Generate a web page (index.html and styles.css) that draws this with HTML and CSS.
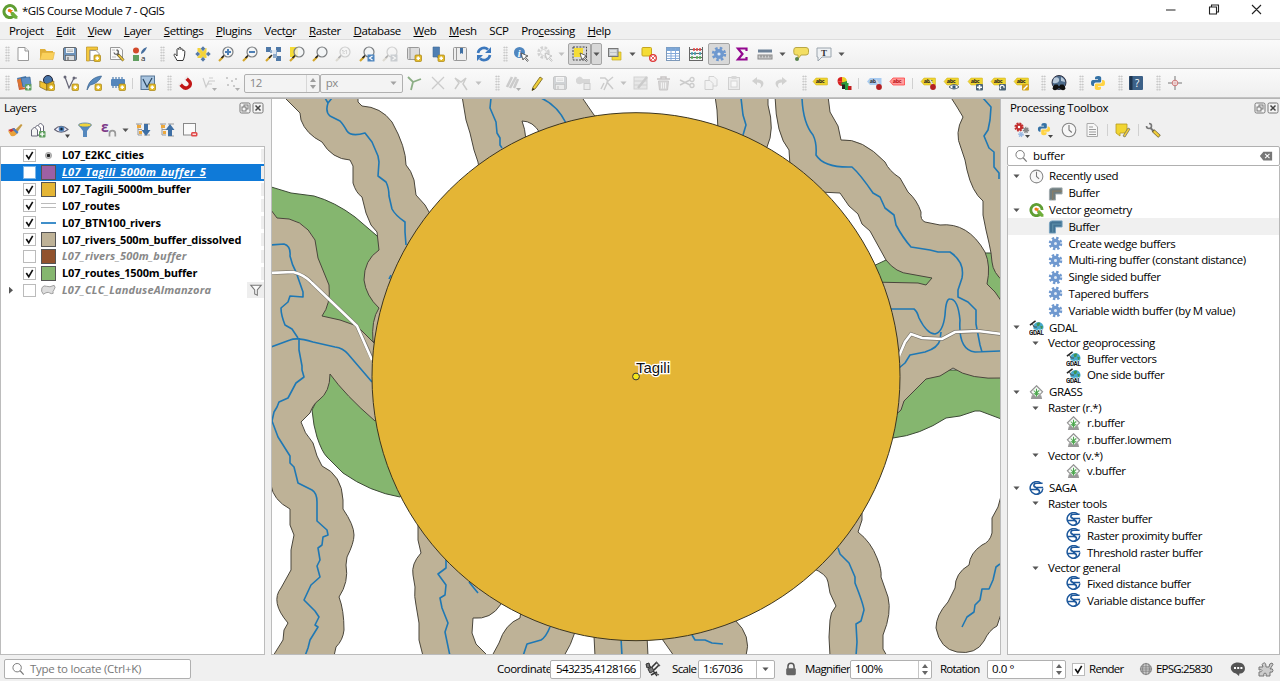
FILE: index.html
```html
<!DOCTYPE html>
<html lang="en">
<head>
<meta charset="utf-8">
<title>*GIS Course Module 7 - QGIS</title>
<link rel="stylesheet" href="styles.css">
</head>
<body>
<svg class="defs" width="0" height="0">
  <symbol id="qgis" viewBox="0 0 16 16"><path d="M11.800 13.200A6 6 0 1 1 14 8.500" fill="none" stroke="#5f9e33" stroke-width="3"/><path d="M8.800 8.800l2.600.1 4 4.300v2.600h-2.600l-4-4z" fill="#6fae3b"/><path d="M7 7h4L9.500 8.700l-.8 2z" fill="#ee7913"/><circle cx="7.500" cy="7.500" r="1.700" fill="#ee7913"/></symbol>
  <symbol id="new" viewBox="0 0 16 16"><path d="M3 1.500h7L13.500 5v9.500H3z" fill="#fff" stroke="#999"/><path d="M10 1.500V5h3.500" fill="#eee" stroke="#999"/></symbol>
  <symbol id="open" viewBox="0 0 16 16"><path d="M1 13V3h5l1.500 2H14v2" fill="#e0b03a"/><path d="M1 13.500L3 6.500h12.500L14 13.500z" fill="#fad15c" stroke="#e0b03a" stroke-width=".6"/></symbol>
  <symbol id="save" viewBox="0 0 16 16"><rect x="1.500" y="1.500" width="13" height="13" rx="1.500" fill="#6d93bb" stroke="#66696d"/><rect x="4" y="2" width="8" height="5" fill="#eef3f7"/><path d="M5 4h6M5 5.500h6" stroke="#999" stroke-width=".7"/><rect x="3.500" y="9.500" width="9" height="5" fill="#d9dcdf" stroke="#555" stroke-width=".6"/><path d="M6 11v3" stroke="#555"/></symbol>
  <symbol id="star" viewBox="0 0 16 16"><rect x="9" y="9" width="6.500" height="6.500" rx="1" fill="#e3bb2b" stroke="#a78310" stroke-width=".7"/><path d="M12.200 10.500v3.500M10.500 12.200h3.500" stroke="#fff" stroke-width="1.600"/></symbol>
  <symbol id="layout" viewBox="0 0 16 16"><path d="M1.500 1h11v3h-8v11h-3z" fill="#f5c83c" stroke="#b88f20" stroke-width=".7"/><path d="M5 4.500h6l3 3v7H5z" fill="#fff" stroke="#999"/><use href="#star"/></symbol>
  <symbol id="manager" viewBox="0 0 16 16"><path d="M1.500 1.500h9.500l2.500 2.500v9.500h-12z" fill="#fafafa" stroke="#999"/><path d="M3 4h3M3 11h4" stroke="#bbb"/><path d="M8.500 8l6 6.500" stroke="#665c33" stroke-width="2.800"/><path d="M9.500 9l5 5.500" stroke="#ecc43e" stroke-width="1.800"/><path d="M5 6.500a2.200 2.200 0 1 0 2.500-2.500" fill="none" stroke="#666" stroke-width="1.400"/></symbol>
  <symbol id="style" viewBox="0 0 16 16"><circle cx="4" cy="4.500" r="3" fill="#d2492a"/><path d="M9 8c0-4 3-6 6-7-1 3-3 6-6 7z" fill="#476f9e"/><rect x="1" y="9" width="6" height="6" fill="#5f9e5f"/><text x="9" y="15" font-size="8" font-family="Open Sans" fill="#222">a</text></symbol>
  <symbol id="hand" viewBox="0 0 16 16"><path d="M5 14.500C3.500 11 1.800 10 2 8.500c1-1 2 0 3 1.500V3.500c.5-1.500 1.700-1 1.900 0V2c.5-1 1.700-1 2 0v1.500c.5-1 1.800-.8 2 0V5c.6-.8 1.700-.6 1.900.3 0 4-.3 5.700-1.800 9.200z" fill="#fff" stroke="#333"/></symbol>
  <symbol id="panto" viewBox="0 0 16 16"><path d="M2.500 2h9v10h-9z" fill="#f3d33a"/><path d="M8 0l2.500 2.700L8 5.400 5.500 2.700zM8 10.600l2.500 2.700L8 16l-2.500-2.700zM0 8l2.700-2.500L5.400 8l-2.700 2.500zM10.600 8l2.700-2.500L16 8l-2.700 2.500z" fill="#5579a6" stroke="#fff" stroke-width=".4"/></symbol>
  <symbol id="mag" viewBox="0 0 16 16"><path d="M5.500 10.500L1 15" stroke="#d3a62a" stroke-width="2.200"/><path d="M6.500 9L3.500 12" stroke="#222" stroke-width="1.600"/><circle cx="10" cy="6" r="5" fill="#f1f4f6" fill-opacity=".75" stroke="#7b7e80" stroke-width="1.200"/></symbol>
  <symbol id="zin" viewBox="0 0 16 16"><use href="#mag"/><path d="M10 3v6M7 6h6" stroke="#4d7fb5" stroke-width="2"/></symbol>
  <symbol id="zout" viewBox="0 0 16 16"><use href="#mag"/><path d="M7 6h6" stroke="#4d7fb5" stroke-width="2"/></symbol>
  <symbol id="zfull" viewBox="0 0 16 16"><path d="M1 1h5v5H1zM11 1h5v5h-5zM11 10h5v5h-5z" fill="#4f79a8"/><path d="M5 4h7v8H8V7H5z" fill="#8faccc"/><path d="M6 10l-5 5" stroke="#d3a62a" stroke-width="2.200"/><path d="M7 9l-3 3" stroke="#222" stroke-width="1.500"/><rect x="7" y="4" width="4" height="4" fill="#fff" opacity=".7"/></symbol>
  <symbol id="zsel" viewBox="0 0 16 16"><rect x="1" y="1" width="8" height="10" fill="#f5dc36"/><use href="#mag"/></symbol>
  <symbol id="zone" viewBox="0 0 16 16"><use href="#mag"/><text x="6.500" y="8" font-size="5" font-family="Open Sans">1:1</text></symbol>
  <symbol id="zlast" viewBox="0 0 16 16"><use href="#mag"/><rect x="8.500" y="8.500" width="7" height="7" fill="#4f86bf"/><path d="M13.500 10l-3 2 3 2" fill="none" stroke="#fff" stroke-width="1.200"/></symbol>
  <symbol id="znext" viewBox="0 0 16 16"><use href="#mag"/><rect x="8.500" y="8.500" width="7" height="7" fill="#4f86bf"/><path d="M10.500 10l3 2-3 2" fill="none" stroke="#fff" stroke-width="1.200"/></symbol>
  <symbol id="book" viewBox="0 0 16 16"><rect x="1.500" y="1.500" width="12" height="12" rx="1" fill="#ddd" stroke="#999"/><path d="M4 1.500v12" stroke="#999"/><use href="#star"/></symbol>
  <symbol id="bm" viewBox="0 0 16 16"><path d="M4 1h6.500v12l-3-2-3.500 0z" fill="#4f7fb2" stroke="#406895" stroke-width=".6"/><use href="#star"/></symbol>
  <symbol id="bms" viewBox="0 0 16 16"><rect x="1.500" y="1.500" width="13" height="13" rx="1" fill="#eee" stroke="#999"/><path d="M4.500 2v12" stroke="#999"/><path d="M8 2h3v6l-1.500-1L8 8z" fill="#3f6fa3"/></symbol>
  <symbol id="refresh" viewBox="0 0 16 16"><path d="M2 7a6 6 0 0 1 10-3.500M14 9a6 6 0 0 1-10 3.500" fill="none" stroke="#3c78bd" stroke-width="2.600"/><path d="M15 1v6H9zM1 15V9h6z" fill="#3c78bd"/></symbol>
  <symbol id="cursor" viewBox="0 0 16 16"><path d="M8 7l7 3-2.700 1 3 3.500-1 .9-3-3.500L10 14z" fill="#fff" stroke="#444" stroke-width=".8"/></symbol>
  <symbol id="ident" viewBox="0 0 16 16"><circle cx="6.500" cy="6.500" r="5.500" fill="#4f86bf"/><text x="4.800" y="10.500" font-size="10" font-style="italic" font-weight="bold" font-family="Liberation Serif" fill="#fff">i</text><use href="#cursor"/></symbol>
  <symbol id="gearc" viewBox="0 0 16 16"><circle cx="6.500" cy="6.500" r="5" fill="none" stroke="#888" stroke-width="2.500" stroke-dasharray="2.600 1.400"/><circle cx="6.500" cy="6.500" r="3" fill="none" stroke="#888"/><use href="#cursor"/></symbol>
  <symbol id="select" viewBox="0 0 16 16"><rect x="1" y="1" width="13.500" height="13" fill="#d8d8d8" stroke="#444" stroke-dasharray="2 1.200"/><path d="M2 2h9v9H2z" fill="#f5dc36"/><use href="#cursor"/></symbol>
  <symbol id="selform" viewBox="0 0 16 16"><path d="M5 6h9v8H5z" fill="#f5dc36" stroke="#c5ab20" stroke-width=".7"/><rect x="1.500" y="2.500" width="9.500" height="8" fill="#bfc3c7" stroke="#777"/><path d="M3 5h6.500M3 8h6.500" stroke="#fff"/></symbol>
  <symbol id="desel" viewBox="0 0 16 16"><rect x="1" y="1.500" width="9.500" height="8.500" rx="1" fill="#f5dc36" stroke="#c5a520"/><circle cx="12" cy="12" r="3.300" fill="#fff" stroke="#d33" stroke-width="1.300"/><path d="M10 10l4 4M10 14l4-4" stroke="#d33" stroke-width=".8"/></symbol>
  <symbol id="table" viewBox="0 0 16 16"><rect x="1.500" y="1.500" width="13" height="13" fill="#fff" stroke="#7d98b8"/><path d="M1.500 1.500h13V5h-13z" fill="#7ba6d6"/><path d="M2 7.500h12M2 10h12M2 12.500h12M6 2v12M10.500 2v12" stroke="#84aada" stroke-width="1"/></symbol>
  <symbol id="abacus" viewBox="0 0 16 16"><path d="M1.500 1v14M14.500 1v14M1 3.500h14M1 7.500h14M1 11.500h14M1 14.500h14" stroke="#666" stroke-width="1"/><path d="M5 3.500h2M8 3.500h2M11 3.500h2" stroke="#d44" stroke-width="2.600"/><path d="M3 7.500h2M6 7.500h2M11 7.500h2" stroke="#49a" stroke-width="2.600"/><path d="M3 11.500h2M8 11.500h2M11 11.500h2" stroke="#5a5" stroke-width="2.600"/></symbol>
  <symbol id="gear" viewBox="0 0 16 16"><circle cx="8" cy="8" r="5.800" fill="none" stroke="#6e98cf" stroke-width="2.800" stroke-dasharray="2.500 2.055"/><circle cx="8" cy="8" r="3.300" fill="#dfe9f5" stroke="#6e98cf" stroke-width="3.400"/></symbol>
  <symbol id="sigma" viewBox="0 0 16 16"><path d="M12.500 5V2.500H4L8.500 8 4 13.500h8.500V11" fill="none" stroke="#93078f" stroke-width="2.200"/></symbol>
  <symbol id="measure" viewBox="0 0 16 16"><rect x="1" y="3.500" width="14" height="3" fill="#6d8197"/><rect x="1" y="9" width="14" height="4" fill="#ccc" stroke="#888"/><path d="M4 9.500v2M7 9.500v2M10 9.500v2M13 9.500v2" stroke="#777"/></symbol>
  <symbol id="tip" viewBox="0 0 16 16"><path d="M3 1.500h10q2.500 0 2.500 2.500v2.500Q15.500 9 13 9H8l-3 4V9H3Q.8 9 .8 6.500V4Q.8 1.500 3 1.500z" fill="#f3de62" stroke="#b9a745"/><circle cx="4" cy="13" r="2" fill="#57844d"/></symbol>
  <symbol id="anno" viewBox="0 0 16 16"><path d="M1 2h14v9H6l-4 4v-4H1z" fill="#eef1f3" stroke="#9aa4ad"/><text x="5" y="10" font-size="9" font-weight="bold" font-family="Liberation Serif" fill="#333">T</text></symbol>
  <symbol id="plus" viewBox="0 0 16 16"><rect x="9" y="9" width="6.500" height="6.500" rx="1" fill="#5f9e5f"/><path d="M12.200 10v4.500M10 12.200h4.500" stroke="#fff" stroke-width="1.300"/></symbol>
  <symbol id="dsm" viewBox="0 0 16 16"><path d="M1 3l9-2 2 8-9 4z" fill="#4f7fb2"/><path d="M1 4l3 9 8-1-2 2-7 1z" fill="#d65f2e"/><path d="M1 5l3 8 3 0L5 3z" fill="#e0742e"/><path d="M5 3l9-1 1 8-8 2z" fill="#5d8fc6" stroke="#345f8d" stroke-width=".6"/><use href="#plus"/></symbol>
  <symbol id="gpkg" viewBox="0 0 16 16"><circle cx="9" cy="5" r="4.500" fill="#4774a8" stroke="#223"/><path d="M.8 6l7 3 7-3v6l-7 3.500-7-3.500z" fill="#f1c232" stroke="#77601b" stroke-width=".7"/><path d="M7.800 9v6" stroke="#77601b"/><use href="#star"/></symbol>
  <symbol id="vnew" viewBox="0 0 16 16"><path d="M2 2l4 11 5-10h3" fill="none" stroke="#667" stroke-width="1.200"/><circle cx="2" cy="2" r="1.500" fill="#667"/><circle cx="11" cy="3" r="1.500" fill="#667"/><use href="#star"/></symbol>
  <symbol id="feather" viewBox="0 0 16 16"><path d="M1 15C2 7 7 2 15.500 1 14 5 10 9 4 10z" fill="#5789bd" stroke="#39618c" stroke-width=".7"/><use href="#star"/></symbol>
  <symbol id="chip" viewBox="0 0 16 16"><path d="M3 2v11M6 2v11M9 2v11M12 2v11" stroke="#6d94bd" stroke-width="1.500"/><rect x="1" y="4" width="14" height="7" rx="1" fill="#5586bb"/><use href="#star"/></symbol>
  <symbol id="vsq" viewBox="0 0 16 16"><rect x="1" y="1" width="13.500" height="13.500" fill="#a9c5e0" stroke="#587796"/><path d="M3 4l4 8 5-9" fill="none" stroke="#28455f" stroke-width="1.200"/><use href="#star"/></symbol>
  <symbol id="magnet" viewBox="0 0 16 16"><path d="M9 3l3.500 3.500c3 4-3 9-7 5L3 9" fill="none" stroke="#c11616" stroke-width="3.400"/><path d="M1.700 10.300l2.600-2.600M7.700 4.300l2.600-2.600" stroke="#eee" stroke-width="2"/></symbol>
  <symbol id="snapv" viewBox="0 0 16 16"><path d="M2 3l3 9 3-6h6M8 3h4M7 9h4" fill="none" stroke="#777" stroke-width="1.200"/><path d="M11 13h5l-2.500 3z" fill="#222"/></symbol>
  <symbol id="dots" viewBox="0 0 16 16"><path d="M2 3h2M7 6h2M3 10h2M9 11h2M11 4h2" stroke="#777" stroke-width="1.800"/><path d="M11 13h5l-2.500 3z" fill="#222"/></symbol>
  <symbol id="topo" viewBox="0 0 16 16"><path d="M2 2l5 5 8-3M7 7L5 15" fill="none" stroke="#8cae85" stroke-width="1.800"/></symbol>
  <symbol id="cross" viewBox="0 0 16 16"><path d="M2 2l12 12M14 2L2 14" stroke="#777" stroke-width="1.300"/></symbol>
  <symbol id="trace" viewBox="0 0 16 16"><path d="M2 14l4-6-4-5 6 4 5-4-3 6 4 6" fill="none" stroke="#776" stroke-width="1.500"/></symbol>
  <symbol id="pens" viewBox="0 0 16 16"><path d="M2 12l5-10M5 13L11 2M9 13l4-9" stroke="#777" stroke-width="2.600"/><path d="M11 13h5l-2.500 3z" fill="#222"/></symbol>
  <symbol id="pencil" viewBox="0 0 16 16"><path d="M4 12l7-10 2.500 1.700L6.500 13.500 3 15.500z" fill="#f0cf3a" stroke="#70601c" stroke-width=".8"/><path d="M3 15.500l.8-2.500 1.800 1.200z" fill="#222"/></symbol>
  <symbol id="addf" viewBox="0 0 16 16"><path d="M1 4q4-5 7 0h7v4H8Q3 11 1 7z" fill="#999"/><rect x="9" y="8.500" width="6" height="6" fill="#ddd" stroke="#777"/></symbol>
  <symbol id="vertex" viewBox="0 0 16 16"><path d="M1 3h5l3 3-4 9M14 2L8 7l6 7M2 14l3-6" fill="none" stroke="#777" stroke-width="1.500"/></symbol>
  <symbol id="formp" viewBox="0 0 16 16"><rect x="1" y="2" width="13" height="12" fill="#ccc" stroke="#888"/><path d="M1 6h13M1 10h13" stroke="#888"/><path d="M5 13L14 2" stroke="#777" stroke-width="2.500"/></symbol>
  <symbol id="trash" viewBox="0 0 16 16"><path d="M1 4h13M5 3.500V2h5v1.500" stroke="#855" stroke-width="1.500" fill="none"/><path d="M2.500 6h10l-1 9h-8z" fill="#a99" stroke="#866"/><path d="M5.500 7.500v6M7.500 7.500v6M9.500 7.500v6" stroke="#eee"/></symbol>
  <symbol id="cut" viewBox="0 0 16 16"><path d="M1 5l10 5M1 10l10-5" stroke="#777" stroke-width="1.500"/><circle cx="13" cy="4.500" r="2" fill="none" stroke="#777" stroke-width="1.300"/><circle cx="13" cy="10.500" r="2" fill="none" stroke="#777" stroke-width="1.300"/></symbol>
  <symbol id="copy" viewBox="0 0 16 16"><path d="M6 1.500h5l3 3V11H6z" fill="#eee" stroke="#888"/><path d="M2 5.500h5l3 3v6H2z" fill="#eee" stroke="#888"/></symbol>
  <symbol id="paste" viewBox="0 0 16 16"><rect x="2.500" y="2.500" width="11" height="12" fill="#ddd" stroke="#888"/><rect x="5.500" y="1" width="5" height="3" fill="#999"/><rect x="5" y="6" width="6" height="6" fill="#fff" stroke="#999"/></symbol>
  <symbol id="undo" viewBox="0 0 16 16"><path d="M2 6l5-4v2.500c8 0 8 6 3 9 2-4 1-6-3-6V10z" fill="#887"/></symbol>
  <symbol id="redo" viewBox="0 0 16 16"><path d="M14 6L9 2v2.500c-8 0-8 6-3 9-2-4-1-6 3-6V10z" fill="#887"/></symbol>
  <symbol id="abc" viewBox="0 0 16 16"><path d="M1 6.500L4 3h11q.5 0 .5.500v6q0 .5-.5.500H4z" fill="#efd42f" stroke="#c9ae1c" stroke-width=".5"/><text x="3.800" y="8.400" font-size="5.500" font-weight="bold" font-family="Open Sans" fill="#222">abc</text></symbol>
  <symbol id="pin" viewBox="0 0 16 16"><path d="M10 5l3 5" stroke="#ddd" stroke-width="1.500"/><circle cx="13" cy="12" r="2.900" fill="#b31f22"/></symbol>
  <symbol id="abcblue" viewBox="0 0 16 16"><path d="M1 6.500L4 3h11.500v7H4z" fill="#a9cbf0"/><text x="3.800" y="8.400" font-size="5.500" font-weight="bold" font-family="Open Sans" fill="#333">ab</text><use href="#pin"/></symbol>
  <symbol id="abcred" viewBox="0 0 16 16"><path d="M1 6.500L4 3h11.500v7H4z" fill="#ff9b9b" stroke="#f44" stroke-width=".8"/><text x="3.800" y="8.400" font-size="5.500" font-weight="bold" font-family="Open Sans" fill="#b11">abc</text></symbol>
  <symbol id="abcpin" viewBox="0 0 16 16"><use href="#abc"/><use href="#pin"/></symbol>
  <symbol id="abceye" viewBox="0 0 16 16"><use href="#abc"/><path d="M6 12q5-5 10 0-5 4-10 0z" fill="#fff" stroke="#456" stroke-width=".9"/><circle cx="11" cy="12" r="1.700" fill="#357"/></symbol>
  <symbol id="abcmove" viewBox="0 0 16 16"><use href="#abc"/><rect x="9" y="9" width="7" height="6.500" rx="1" fill="#4b6478"/><path d="M12.500 10v4.500M10 12.200h5" stroke="#fff" stroke-width="1.600"/></symbol>
  <symbol id="abcrot" viewBox="0 0 16 16"><use href="#abc"/><rect x="9" y="9" width="7" height="6.500" rx="1" fill="#4b6478"/><path d="M11 14a2 2 0 1 1 3-1" fill="none" stroke="#fff" stroke-width="1.200"/></symbol>
  <symbol id="abcedit" viewBox="0 0 16 16"><use href="#abc"/><rect x="9" y="9" width="7" height="6.500" rx="1" fill="#d5a51b"/><path d="M10.500 14.500l4-4" stroke="#fff" stroke-width="1.500"/></symbol>
  <symbol id="diag" viewBox="0 0 16 16"><path d="M1.500 6Q1.500 2 6 2v5z" fill="#d82020"/><path d="M6 2q5 0 5 5L6 7z" fill="#efcf25"/><path d="M1.500 6L6 7h5q0 4-5 4-4 0-4.500-5z" fill="#d82020"/><path d="M5 8l6-2q1 4-5 5z" fill="#299a3b"/><path d="M6 9.500h3V14H6z" fill="#222"/><path d="M9 8h3.500v7H9z" fill="#2a9a3c"/><path d="M12 11h3.500v4H12z" fill="#c11d1d"/></symbol>
  <symbol id="globe" viewBox="0 0 16 16"><circle cx="8" cy="7.500" r="7" fill="#4d6c8c" stroke="#334"/><path d="M3 3q4-2 5 1T5 8 2 6zM10 2q4 2 4 5l-4-1z" fill="#b8c9da"/><path d="M3.500 9.500h3L8 11.500l1.500-2h3l2 4.500H9.500L8 13l-1.500 1H1.500z" fill="#111"/><circle cx="4" cy="13" r="2.300" fill="#111"/><circle cx="12" cy="13" r="2.300" fill="#111"/></symbol>
  <symbol id="py" viewBox="0 0 16 16"><path d="M8 1c3 0 3.200 1 3.200 2.500V6q0 1.500-1.500 1.500h-4Q4 7.500 4 9.200V11H3Q1 11 1 8t2-3h5v-.7H5V3Q5 1 8 1z" fill="#3572a5"/><path d="M8 15c-3 0-3.200-1-3.200-2.500V10q0-1.500 1.500-1.500h4Q12 8.500 12 6.800V5h1q2 0 2 3t-2 3H8v.7h3V13q0 2-3 2z" fill="#ffd343"/></symbol>
  <symbol id="help" viewBox="0 0 16 16"><rect x="1" y="1" width="14" height="14" rx="1" fill="#3c6188"/><path d="M3 1v14" stroke="#1e344d" stroke-width="3"/><text x="7" y="11.500" font-size="10" font-family="Open Sans" fill="#fff">?</text></symbol>
  <symbol id="target" viewBox="0 0 16 16"><path d="M8 1v14M1 8h14" stroke="#777"/><circle cx="8" cy="8" r="2.800" fill="#f4f4f4" stroke="#cf7676"/><path d="M8 6v4M6 8h4" stroke="#d99" stroke-width=".7"/></symbol>
  <symbol id="brush" viewBox="0 0 16 16"><path d="M8 8l6-6 1.500 1-5 7z" fill="#c79b45"/><path d="M1 9q4 1 6-3l4 4q-2 5-7 4z" fill="#e8a23c"/><path d="M1 8l6-2 1.500 1.500L4 10z" fill="#c33"/><path d="M7 6l4.500 4-1.500 2-5-5z" fill="#4a7ec0"/></symbol>
  <symbol id="grp" viewBox="0 0 16 16"><path d="M7.500 13V4l3-3 3 3v9z" fill="#fff" stroke="#667"/><path d="M4.500 13V6l3-3 3 3v7z" fill="#fff" stroke="#667"/><path d="M1.500 14V8l3-3 3 3v6z" fill="#f4f4f4" stroke="#667"/><use href="#plus"/></symbol>
  <symbol id="eye" viewBox="0 0 16 16"><path d="M.5 7.500Q7 1 14 7.500 7 13 .5 7.500z" fill="#eef" stroke="#667" stroke-width="1.100"/><circle cx="7.500" cy="7" r="2.800" fill="#4b7eb5"/><circle cx="7.500" cy="7" r="1.200" fill="#123"/><path d="M11 12.500h5L13.500 16z" fill="#444"/></symbol>
  <symbol id="funnel" viewBox="0 0 16 16"><path d="M1.500 3l4.500 6v6h4V9l4.500-6z" fill="#5588bd"/><ellipse cx="8" cy="3" rx="6.500" ry="2" fill="#f0d43c" stroke="#4c7caf" stroke-width=".8"/></symbol>
  <symbol id="eps" viewBox="0 0 16 16"><text x="0" y="9.500" font-size="14" font-weight="bold" font-family="Open Sans" fill="#7c3a88">ε</text><path d="M8.500 14.500v-3a2.900 2.900 0 0 1 5.800 0v3" fill="none" stroke="#999" stroke-width="1.700"/></symbol>
  <symbol id="expand" viewBox="0 0 16 16"><path d="M1 2h6M3 2v11M3 7.500h4M3 13h4M9 2h6M9 13h6" stroke="#999" fill="none"/><path d="M2 3h4v3H2zM4 9h3v3H4z" fill="#eda83b"/><path d="M9 2h4v6h2.500L11 14 6.500 8H9z" fill="#3e6fa5"/></symbol>
  <symbol id="collapse" viewBox="0 0 16 16"><path d="M1 2h6M3 2v11M3 7.500h4M3 13h4M9 2h6M9 14h6" stroke="#999" fill="none"/><path d="M2 3h4v3H2zM4 9h3v3H4z" fill="#eda83b"/><path d="M9 14h4V8h2.500L11 2 6.500 8H9z" fill="#3e6fa5"/></symbol>
  <symbol id="remove" viewBox="0 0 16 16"><rect x="1.500" y="1.500" width="12" height="11.500" fill="#fafafa" stroke="#888"/><rect x="9" y="10" width="6.500" height="4.500" rx="1.500" fill="#e04848"/><path d="M10.500 12.200h3.500" stroke="#fff" stroke-width="1.200"/></symbol>
  <symbol id="gears3" viewBox="0 0 16 16"><circle cx="5" cy="5" r="3.400" fill="#c22f2f" stroke="#c22f2f" stroke-width="2.400" stroke-dasharray="1.700 .97"/><circle cx="5" cy="5" r="1.200" fill="#fff"/><circle cx="12" cy="8" r="2.200" fill="#888" stroke="#888" stroke-width="2" stroke-dasharray="1 .73"/><circle cx="7" cy="12.500" r="1.800" fill="#9ab9e2" stroke="#9ab9e2" stroke-width="2" stroke-dasharray="1 .6"/><path d="M11 13h5l-2.500 3z" fill="#444"/></symbol>
  <symbol id="pyd" viewBox="0 0 16 16"><use href="#py" width="14" height="14"/><path d="M11 13h5l-2.500 3z" fill="#444"/></symbol>
  <symbol id="clock" viewBox="0 0 16 16"><circle cx="8" cy="8" r="6.800" fill="#f7f7f7" stroke="#858585" stroke-width="1.100"/><path d="M8 3v5l2.800 2.500" fill="none" stroke="#777" stroke-width="1.100"/></symbol>
  <symbol id="doc" viewBox="0 0 16 16"><path d="M3 1.500h7l3.500 3.500v9.500H3z" fill="#f7f7f7" stroke="#aaa"/><path d="M5 5h4M5 7.500h7M5 10h7M5 12.500h7" stroke="#999"/></symbol>
  <symbol id="inplace" viewBox="0 0 16 16"><path d="M1 2h11v9H5v3L1 11z" fill="#f1d532" stroke="#b59b21" stroke-width=".8"/><path d="M8 14l5-8 2 1-5 8z" fill="#f3cc38" stroke="#776" stroke-width=".8"/></symbol>
  <symbol id="wrench" viewBox="0 0 16 16"><path d="M5.500 6l3 3" stroke="#777" stroke-width="2"/><path d="M8 8.500l6.500 6" stroke="#665c33" stroke-width="3.600"/><path d="M8.800 9.200l5.200 4.900" stroke="#f0cc3b" stroke-width="2.400"/><path d="M1.500 4A2.500 2.500 0 1 0 4 1.500" fill="none" stroke="#777" stroke-width="1.600"/></symbol>
  <symbol id="search" viewBox="0 0 16 16"><circle cx="7" cy="6.500" r="4.800" fill="none" stroke="#777" stroke-width="1.100"/><path d="M10.500 10l4 4.500" stroke="#777" stroke-width="1.300"/></symbol>
  <symbol id="clear" viewBox="0 0 16 16"><path d="M1 8l4-5h10v10H5z" fill="#777"/><path d="M7 5.500l5 5M12 5.500l-5 5" stroke="#fff" stroke-width="1.200"/></symbol>
  <symbol id="bufg" viewBox="0 0 16 16"><path d="M1.500 15V5q0-3 3-3H15v6.500H8V15z" fill="#6f7d80" stroke="#a0aaac"/><path d="M5 15V5.500h10" fill="none" stroke="#877d68" stroke-width="1.500"/></symbol>
  <symbol id="bufb" viewBox="0 0 16 16"><path d="M1.500 15V5q0-3 3-3H15v6.500H8V15z" fill="#437394" stroke="#76a1c0"/><path d="M5 15V5.500h10" fill="none" stroke="#5a8aa5" stroke-width="1.500"/></symbol>
  <symbol id="gdal" viewBox="0 0 16 16"><circle cx="10" cy="7.500" r="5.500" fill="#45a9cc"/><path d="M8 4q2-2 4-1l-1 3-2 1zM12 6l3 1-2 3z" fill="#3f9250"/><path d="M1 5.500l6-4.500" stroke="#222" stroke-width="1.600"/><path d="M3.500 4l2 3.500h3" fill="none" stroke="#444"/><text x="0" y="15.500" font-size="7" font-weight="bold" font-family="Roboto" textLength="15.500" lengthAdjust="spacingAndGlyphs" fill="#111" stroke="#fff" stroke-width="1.200" paint-order="stroke">GDAL</text></symbol>
  <symbol id="grass" viewBox="0 0 16 16"><path d="M3 11l-1 4h12l-1-4" fill="#999"/><path d="M8 .8l6.500 6.500L8 14 1.500 7.300z" fill="#f6f8f6" stroke="#929292" stroke-width="1.200"/><path d="M8 12.500C8 9 7 7 5 6M8 12.500c0-4 1-6 3-6.500M8 12.500V4M8 11c-1-1.500-2-2-3-2M8 11c1-1.500 2-2 3-2" fill="none" stroke="#4ba64d" stroke-width="1.100"/></symbol>
  <symbol id="saga" viewBox="0 0 16 16"><path d="M12.500 2.300A6.800 6.800 0 1 0 14.800 8" fill="none" stroke="#1d589c" stroke-width="1.600"/><path d="M14.500 2.500H8.500C4.500 2.500 4 6 7.500 7H15M2 9h6.500c3.500.5 3.500 4 0 5.300M5 5l6.500 5.500" fill="none" stroke="#1d589c" stroke-width="1.600"/></symbol>
  <symbol id="poly" viewBox="0 0 16 16"><path d="M1 5q2-3 5-1.500t8-1q2 2 0 4.500t-1 4q-2 1-4-.5T2.500 12Q-.5 9 1 5z" fill="#ddd" stroke="#999"/></symbol>
  <symbol id="filt" viewBox="0 0 16 16"><path d="M2 2.500h12L9.500 8v6l-3-1.500V8z" fill="#fafafa" stroke="#777" stroke-width="1.200"/></symbol>
  <symbol id="float" viewBox="0 0 12 12"><rect x="1" y="1" width="10" height="10" rx="1.500" fill="#f4f4f4" stroke="#777"/><rect x="5" y="3" width="4" height="4" fill="none" stroke="#777"/><rect x="3" y="5" width="4" height="4" fill="#f4f4f4" stroke="#777"/></symbol>
  <symbol id="closep" viewBox="0 0 12 12"><rect x="1" y="1" width="10" height="10" rx="1.500" fill="#f4f4f4" stroke="#777"/><path d="M3.500 3.500l5 5M8.500 3.500l-5 5" stroke="#444" stroke-width="1.500"/></symbol>
  <symbol id="tri" viewBox="0 0 8 5"><path d="M.5.500h7L4 4.500z" fill="#555"/></symbol>
  <symbol id="check" viewBox="0 0 12 12"><path d="M2.500 5.500l2.700 4L9.500 2" fill="none" stroke="#111" stroke-width="1.800"/></symbol>
  <symbol id="ext" viewBox="0 0 16 16"><path d="M3 3l9 12" stroke="#333" stroke-width="1.300"/><path d="M1 3l3-1 1 4-3 1zM3 8l4-2 2 4-4 2z" fill="#777" stroke="#333"/><path d="M7 6l5-5M9 9l5-5M6 14l6-3" stroke="#333" stroke-width="1.600"/><path d="M11 1l4 4M10 12l4 2" stroke="#555" stroke-width="1.300"/></symbol>
  <symbol id="lock" viewBox="0 0 16 16"><path d="M4.500 8V5a3.500 3.500 0 0 1 7 0v3" fill="none" stroke="#555" stroke-width="1.700"/><rect x="2.500" y="7" width="11" height="8" rx="1.500" fill="#666"/></symbol>
  <symbol id="crs" viewBox="0 0 16 16"><circle cx="8" cy="8" r="6.200" fill="#ccc" stroke="#777"/><path d="M2 5.500h12M1 8h14M2 10.500h12M8 1v14M5 2q-2 6 0 12M11 2q2 6 0 12" stroke="#777" fill="none" stroke-width=".8"/></symbol>
  <symbol id="bubble" viewBox="0 0 16 16"><path d="M8 1.500c9 0 9 11 1.500 11L9 15l-3-2.500C-1.500 11-1 1.500 8 1.500z" fill="#555"/><path d="M4 7h2M7.200 7h2M10.400 7h2" stroke="#fff" stroke-width="1.800"/></symbol>
  <symbol id="puzzle" viewBox="0 0 16 16"><path d="M1 6h4q-2-3 .5-4T8 6h3q0-4 3-4 2 1 0 3l-2 3q3-1 3 1.500T12 11v4H8q1-3-1-3t-1 3H1v-4q3 0 3-1.500T1 9z" fill="#ccc" stroke="#777"/></symbol>
</svg>

<div class="app">
  <header class="title">
    <svg class="i"><use href="#qgis"/></svg><span>*GIS Course Module 7 - QGIS</span>
    <svg class="winbtns" viewBox="0 0 110 14"><path d="M4 8h9.500M47.500 5h7v7h-7zM49.500 5V3h7v7h-2M90 3l9 9M99 3l-9 9" fill="none" stroke="#222" stroke-width="1.100"/></svg>
  </header>
  <nav class="menu"><span>Pro<u>j</u>ect</span><span><u>E</u>dit</span><span><u>V</u>iew</span><span><u>L</u>ayer</span><span><u>S</u>ettings</span><span><u>P</u>lugins</span><span>Vect<u>o</u>r</span><span><u>R</u>aster</span><span><u>D</u>atabase</span><span><u>W</u>eb</span><span><u>M</u>esh</span><span>SCP</span><span>Pro<u>c</u>essing</span><span><u>H</u>elp</span></nav>

  <div class="bar">
    <div class="grp g155"><i class="handle"></i><b><svg class="i"><use href="#new"/></svg></b><b><svg class="i"><use href="#open"/></svg></b><b><svg class="i"><use href="#save"/></svg></b><b><svg class="i"><use href="#layout"/></svg></b><b><svg class="i"><use href="#manager"/></svg></b><b><svg class="i"><use href="#style"/></svg></b></div>
    <div class="grp g343"><i class="handle"></i><b class="ml"><svg class="i"><use href="#hand"/></svg></b><b><svg class="i"><use href="#panto"/></svg></b><b><svg class="i"><use href="#zin"/></svg></b><b><svg class="i"><use href="#zout"/></svg></b><b><svg class="i"><use href="#zfull"/></svg></b><b><svg class="i"><use href="#zsel"/></svg></b><b><svg class="i"><use href="#mag"/></svg></b><b class="off"><svg class="i"><use href="#zone"/></svg></b><b><svg class="i"><use href="#zlast"/></svg></b><b class="off"><svg class="i"><use href="#znext"/></svg></b><b><svg class="i"><use href="#book"/></svg></b><b><svg class="i"><use href="#bm"/></svg></b><b><svg class="i"><use href="#bms"/></svg></b><b><svg class="i"><use href="#refresh"/></svg></b></div>
    <div class="grp"><i class="handle"></i><b><svg class="i"><use href="#ident"/></svg></b><b class="off"><svg class="i"><use href="#gearc"/></svg></b><b class="arr off"><svg class="t"><use href="#tri"/></svg></b><b class="press ml"><svg class="i"><use href="#select"/></svg></b><b class="press parr"><svg class="t"><use href="#tri"/></svg></b><b class="ml"><svg class="i"><use href="#selform"/></svg></b><b class="arr"><svg class="t"><use href="#tri"/></svg></b><b><svg class="i"><use href="#desel"/></svg></b><b><svg class="i"><use href="#table"/></svg></b><b><svg class="i"><use href="#abacus"/></svg></b><b class="press"><svg class="i"><use href="#gear"/></svg></b><b><svg class="i"><use href="#sigma"/></svg></b><b><svg class="i"><use href="#measure"/></svg></b><b class="arr"><svg class="t"><use href="#tri"/></svg></b><b class="ml"><svg class="i"><use href="#tip"/></svg></b><b><svg class="i"><use href="#anno"/></svg></b><b class="arr"><svg class="t"><use href="#tri"/></svg></b></div>
  </div>
  <div class="bar">
    <div class="grp g162"><i class="handle"></i><b class="ml1"><svg class="i"><use href="#dsm"/></svg></b><b><svg class="i"><use href="#gpkg"/></svg></b><b><svg class="i"><use href="#vnew"/></svg></b><b><svg class="i"><use href="#feather"/></svg></b><b><svg class="i"><use href="#chip"/></svg></b><i class="sep"></i><b><svg class="i"><use href="#vsq"/></svg></b></div>
    <div class="grp g328"><i class="handle"></i><b class="ml0"><svg class="i"><use href="#magnet"/></svg></b><b class="off"><svg class="i"><use href="#snapv"/></svg></b><b class="off"><svg class="i"><use href="#dots"/></svg></b><div class="field dis w76"><span>12</span><i class="spin"></i></div><div class="field dis w82"><span>px</span><svg class="t"><use href="#tri"/></svg></div><b><svg class="i"><use href="#topo"/></svg></b><b class="off"><svg class="i"><use href="#cross"/></svg></b><b class="off"><svg class="i"><use href="#trace"/></svg></b><b class="arr off"><svg class="t"><use href="#tri"/></svg></b></div>
    <div class="grp g307"><i class="handle"></i><b class="off"><svg class="i"><use href="#pens"/></svg></b><b><svg class="i"><use href="#pencil"/></svg></b><b class="off"><svg class="i"><use href="#save"/></svg></b><b class="off"><svg class="i"><use href="#addf"/></svg></b><b class="off"><svg class="i"><use href="#vertex"/></svg></b><b class="arr off"><svg class="t"><use href="#tri"/></svg></b><b class="off"><svg class="i"><use href="#formp"/></svg></b><b class="off"><svg class="i"><use href="#trash"/></svg></b><b class="off"><svg class="i"><use href="#cut"/></svg></b><b class="off"><svg class="i"><use href="#copy"/></svg></b><b class="off"><svg class="i"><use href="#paste"/></svg></b><b class="off"><svg class="i"><use href="#undo"/></svg></b><b class="off"><svg class="i"><use href="#redo"/></svg></b></div>
    <div class="grp g239"><i class="handle"></i><b><svg class="i"><use href="#abc"/></svg></b><b><svg class="i"><use href="#diag"/></svg></b><i class="sep"></i><b><svg class="i"><use href="#abcblue"/></svg></b><b><svg class="i"><use href="#abcred"/></svg></b><i class="sep"></i><b><svg class="i"><use href="#abcpin"/></svg></b><b><svg class="i"><use href="#abceye"/></svg></b><b><svg class="i"><use href="#abcmove"/></svg></b><b><svg class="i"><use href="#abcrot"/></svg></b><b><svg class="i"><use href="#abcedit"/></svg></b></div>
    <div class="grp g38"><i class="handle"></i><b><svg class="i"><use href="#globe"/></svg></b></div>
    <div class="grp g38"><i class="handle"></i><b><svg class="i"><use href="#py"/></svg></b></div>
    <div class="grp g38"><i class="handle"></i><b><svg class="i"><use href="#help"/></svg></b></div>
    <div class="grp g38"><i class="handle"></i><b><svg class="i"><use href="#target"/></svg></b></div>
  </div>

  <main class="main">
    <section class="layers">
      <div class="phead"><span>Layers</span><svg class="p"><use href="#float"/></svg><svg class="p"><use href="#closep"/></svg></div>
      <div class="ptools"><b><svg class="i"><use href="#brush"/></svg></b><b><svg class="i"><use href="#grp"/></svg></b><b><svg class="i"><use href="#eye"/></svg></b><b><svg class="i"><use href="#funnel"/></svg></b><b><svg class="i"><use href="#eps"/></svg></b><b class="arr"><svg class="t"><use href="#tri"/></svg></b><b class="ml"><svg class="i"><use href="#expand"/></svg></b><b><svg class="i"><use href="#collapse"/></svg></b><b><svg class="i"><use href="#remove"/></svg></b></div>
      <div class="ltree">
        <div class="lrow"><i class="cb"><svg><use href="#check"/></svg></i><i class="sw pt"></i><span>L07_E2KC_cities</span></div>
        <div class="lrow sel"><i class="cb"></i><i class="sw purple"></i><span>L07_Tagili_5000m_buffer_5</span></div>
        <div class="lrow"><i class="cb"><svg><use href="#check"/></svg></i><i class="sw gold"></i><span>L07_Tagili_5000m_buffer</span></div>
        <div class="lrow"><i class="cb"><svg><use href="#check"/></svg></i><i class="sw road"></i><span>L07_routes</span></div>
        <div class="lrow"><i class="cb"><svg><use href="#check"/></svg></i><i class="sw river"></i><span>L07_BTN100_rivers</span></div>
        <div class="lrow"><i class="cb"><svg><use href="#check"/></svg></i><i class="sw tan"></i><span>L07_rivers_500m_buffer_dissolved</span></div>
        <div class="lrow hid"><i class="cb"></i><i class="sw brown"></i><span>L07_rivers_500m_buffer</span></div>
        <div class="lrow"><i class="cb"><svg><use href="#check"/></svg></i><i class="sw green"></i><span>L07_routes_1500m_buffer</span></div>
        <div class="lrow hid last"><i class="tw"></i><i class="cb"></i><svg class="sw none"><use href="#poly"/></svg><span>L07_CLC_LanduseAlmanzora</span><b class="fbtn"><svg class="i14"><use href="#filt"/></svg></b></div>
      </div>
    </section>
    <div class="split"></div>
    <section class="map">
      <svg viewBox="272 98 729 556" width="729" height="556">
        <g class="green">
          <path d="M268 186L291 193 314 196Q335 202 355 217L376 235 390 250 390 350 268 340z"/>
          <path d="M312 410L314 425 317 437Q322 452 327 457L343 473Q370 492 400 497L420 480 380 380 330 374z"/>
          <path d="M865 270L886 260 940 270 930 290 870 290z"/>
          <path d="M985 253H991L1005 260V305L980 290z"/>
          <path d="M893 438Q920 435 946 418L960 416 975 411H980L1004 420V370H900L880 420z"/>
        </g>
        <g class="tan">
          <path d="M283 96L300 113 301 120Q306 134 322 142 332 159 350 160L353 166V183Q356 193 362 197L366 213 371 225 377 232 379 250Q364 260 364 280 366 296 379 308 371 320 373 342L420 330 440 230 429 212 425 205 416 195 414 180Q411 170 406 165 406 147 392 122 381 107 362 106L358 102V96z"/>
          <path d="M268 206L277 218Q303 217 315 240L318 258 329 285Q331 304 322 316L340 320 357 326 374 343 420 380 375 421Q345 395 330 374 330 392 319 400 313 404 310 413L301 422Q304 433 313 443L317 456 322 466Q342 475 343 500V509Q354 525 354 535 354 543 347 557L346 565Q349 582 339 597 344 610 344 630 343 640 336 647L334 656H273L283 640 284 630 288 623Q270 602 281 588L291 570V550L294 535 290 525V509Q273 500 271 485L268 480z"/>
          <path d="M462 96L466 120 470 133 474 150 478 162 480 175 600 120 594 115 581 96z"/>
          <path d="M715 96L717 110 718 130 760 155 767 147Q775 130 768 105V96z"/>
          <path d="M775 96Q776 135 789 150L790 166 820 192 840 193 849 206 858 214 862 224 870 231 886 260Q896 273 910 274L932 278 926 285 918 283 870 282 890 420 901 410 904 401 926 379 940 376 953 368Q970 380 1004 378V305L995 292 987 284Q991 266 985 252 968 222 940 225L925 222Q920 220 921 212 917 200 908 192L900 178Q889 171 885 162 862 138 841 140L838 126 830 112 828 96z"/>
          <path d="M950 96L957 107 963 117Q954 133 961 148L965 160 967 170Q972 192 983 201V215L986 230 989 243 991 253 992 262Q993 273 1004 282V96z"/>
          <path d="M418 524V540L421 553Q411 564 413 575L415 587Q414 597 416 605L419 623V640L423 656H488L476 644 472 633 473 618Q491 620 501 604L480 560z"/>
          <path d="M521 610L520 618Q505 624 499 643L492 656H564Q571 645 575 632z"/>
          <path d="M594 636L595 656H648L647 636z"/><path d="M660 636L674 656H746Q752 636 735 620z"/>
          <path d="M812 568Q827 574 828 582L830 593 836 606Q830 613 830 620L829 637 830 656H887L883 649V635Q892 613 888 597L881 577Q882 570 877 558 871 542 858 532L862 520V508z"/>
          <path d="M1004 485L998 507 992 518V533Q990 542 982 545 970 553 969 565 955 573 955 588L948 602Q936 615 936 628 940 649 957 652 976 655 984 641 989 630 997 626L1000 617 1004 605z"/>
        </g>
        <path class="hole" d="M522 121Q533 121 540 133L526 140Q525 128 522 121z"/>
        <g class="rv">
          <path d="M325 98L328 103 332 98M328 103Q325 112 330 116L340 121Q343 124 347 131 351 137 365 133L372 142 378 156 379 162 378 176 386 182Q389 188 389 196L392 209Q395 215 405 222V232L406 245M389 279L391 275"/>
          <path d="M271 245L284 244Q291 246 290 256 292 265 296 272L303 292V297L290 296 288 302 281 308Q281 315 285 325L292 329 298 338M271 347L290 340Q297 337 313 342L335 347Q343 348 348 354L372 382M299 338L299 350 302 366V370L304 377 296 383 288 398 279 402 277 407 274 412 272 421 278 437 290 456V463L294 467 298 483 312 490Q317 493 317 502V521L327 530 328 535 323 537 322 545 318 548 320 560 317 566 320 577 311 585 304 600 315 611 319 617 315 625 318 627 310 640 308 648 305 656"/>
          <path d="M491 98L490 108 496 122 497 133 500 138V145L502 148M541 98Q557 105 566 123M741 98L743 115 746 125 743 135M802 98Q803 123 813 135 817 143 816 155 824 168 852 167 860 174 873 193L880 197 885 208 894 215 896 225Q903 238 911 247L930 250 938 252H950Q965 262 962 278L958 290V297L968 302 976 310V324L980 345 982 352M889 309H914Q917 311 919 318 927 334 935 334 943 332 945 315 946 298 950 299 958 299 960 320 958 350 975 352L1001 351M941 332L940 340Q938 348 925 352L910 355 905 363 899 368M983 98L991 107 990 120 988 130 984 136 989 148 994 152V167L999 173V179"/>
          <path d="M446 555V568L438 574 446 585 445 595 440 598 442 608 448 623 445 632 450 656M469 582L478 593M550 627Q546 637 541 640L527 644 523 656M621 638L622 656M692 635L695 640H705L712 643 723 644M838 548L840 554 849 563 855 577V583Q863 603 864 610L861 621 856 624 857 642 856 656M1000 564L996 567 993 580 989 589H982L980 600 975 605 974 612 967 617 962 627"/>
        </g>
        <path class="r1" d="M271 273L293 272Q305 275 312 283L357 326 372 359M899 355L905 342 911 334 922 338 942 339 955 332 978 331 1001 334"/>
        <path class="r2" d="M270 273L293 272Q305 275 312 283L357 326 372 360M899 356L905 342 911 334 922 338 942 339 955 332 978 331 1002 334"/>
        <circle class="gold" cx="636" cy="376.700" r="264"/>
        <circle class="city" cx="636" cy="376.500" r="3.400"/>
        <text class="lbl" x="636" y="373" textLength="34">Tagili</text>
      </svg>
    </section>
    <div class="split2"></div>
    <section class="tool">
      <div class="phead"><span>Processing Toolbox</span><svg class="p"><use href="#float"/></svg><svg class="p"><use href="#closep"/></svg></div>
      <div class="ptools"><b><svg class="i"><use href="#gears3"/></svg></b><b><svg class="i"><use href="#pyd"/></svg></b><b><svg class="i"><use href="#clock"/></svg></b><b><svg class="i"><use href="#doc"/></svg></b><i class="sep"></i><b><svg class="i"><use href="#inplace"/></svg></b><i class="sep"></i><b><svg class="i"><use href="#wrench"/></svg></b></div>
      <div class="search"><svg class="i14"><use href="#search"/></svg><span>buffer</span><svg class="i14"><use href="#clear"/></svg></div>
      <div class="ttree">
        <div class="r l0"><svg class="t"><use href="#tri"/></svg><svg class="i"><use href="#clock"/></svg><span>Recently used</span></div>
        <div class="r l1"><svg class="i"><use href="#bufg"/></svg><span>Buffer</span></div>
        <div class="r l0"><svg class="t"><use href="#tri"/></svg><svg class="i"><use href="#qgis"/></svg><span>Vector geometry</span></div>
        <div class="r l1 hov"><svg class="i"><use href="#bufb"/></svg><span>Buffer</span></div>
        <div class="r l1"><svg class="i"><use href="#gear"/></svg><span>Create wedge buffers</span></div>
        <div class="r l1"><svg class="i"><use href="#gear"/></svg><span>Multi-ring buffer (constant distance)</span></div>
        <div class="r l1"><svg class="i"><use href="#gear"/></svg><span>Single sided buffer</span></div>
        <div class="r l1"><svg class="i"><use href="#gear"/></svg><span>Tapered buffers</span></div>
        <div class="r l1"><svg class="i"><use href="#gear"/></svg><span>Variable width buffer (by M value)</span></div>
        <div class="r l0"><svg class="t"><use href="#tri"/></svg><svg class="i"><use href="#gdal"/></svg><span>GDAL</span></div>
        <div class="r sub"><svg class="t"><use href="#tri"/></svg><span>Vector geoprocessing</span></div>
        <div class="r l2"><svg class="i"><use href="#gdal"/></svg><span>Buffer vectors</span></div>
        <div class="r l2"><svg class="i"><use href="#gdal"/></svg><span>One side buffer</span></div>
        <div class="r l0"><svg class="t"><use href="#tri"/></svg><svg class="i"><use href="#grass"/></svg><span>GRASS</span></div>
        <div class="r sub"><svg class="t"><use href="#tri"/></svg><span>Raster (r.*)</span></div>
        <div class="r l2"><svg class="i"><use href="#grass"/></svg><span>r.buffer</span></div>
        <div class="r l2"><svg class="i"><use href="#grass"/></svg><span>r.buffer.lowmem</span></div>
        <div class="r sub"><svg class="t"><use href="#tri"/></svg><span>Vector (v.*)</span></div>
        <div class="r l2"><svg class="i"><use href="#grass"/></svg><span>v.buffer</span></div>
        <div class="r l0"><svg class="t"><use href="#tri"/></svg><svg class="i"><use href="#saga"/></svg><span>SAGA</span></div>
        <div class="r sub"><svg class="t"><use href="#tri"/></svg><span>Raster tools</span></div>
        <div class="r l2"><svg class="i"><use href="#saga"/></svg><span>Raster buffer</span></div>
        <div class="r l2"><svg class="i"><use href="#saga"/></svg><span>Raster proximity buffer</span></div>
        <div class="r l2"><svg class="i"><use href="#saga"/></svg><span>Threshold raster buffer</span></div>
        <div class="r sub"><svg class="t"><use href="#tri"/></svg><span>Vector general</span></div>
        <div class="r l2"><svg class="i"><use href="#saga"/></svg><span>Fixed distance buffer</span></div>
        <div class="r l2"><svg class="i"><use href="#saga"/></svg><span>Variable distance buffer</span></div>
      </div>
    </section>
  </main>

  <footer class="status">
    <div class="field locate"><svg class="i14"><use href="#search"/></svg><span>Type to locate (Ctrl+K)</span></div>
    <span class="s-coord">Coordinate</span><div class="field f-coord"><span>543235,4128166</span></div>
    <b class="s-ext"><svg class="i"><use href="#ext"/></svg></b>
    <span class="s-scale">Scale</span><div class="field f-scale"><span>1:67036</span><i class="drop"><svg class="t"><use href="#tri"/></svg></i></div>
    <b class="s-lock"><svg class="i14"><use href="#lock"/></svg></b>
    <span class="s-mag">Magnifier</span><div class="field f-mag"><span>100%</span><i class="spin"></i></div>
    <span class="s-rot">Rotation</span><div class="field f-rot"><span>0.0 °</span><i class="spin"></i></div>
    <span class="s-render"><i class="cb"><svg><use href="#check"/></svg></i>Render</span>
    <span class="s-crs"><svg class="i14"><use href="#crs"/></svg>EPSG:25830</span>
    <svg class="i"><use href="#bubble"/></svg><svg class="i s-puz"><use href="#puzzle"/></svg>
  </footer>
</div>
</body>
</html>
```

FILE: styles.css
```css
* { box-sizing: border-box; }
body { margin: 0; width: 1280px; height: 681px; overflow: hidden; background: #f0f0f0; color: #000; font: 11.5px/16px "Open Sans", "Noto Sans", sans-serif; letter-spacing: -.4px; white-space: nowrap; }
.defs { display: none; }
i { font-style: normal; }
b { font-weight: normal; }
svg { display: block; flex: none; }
.i { width: 16px; height: 16px; }
.i14 { width: 14px; height: 14px; }
.t { width: 7px; height: 4.5px; }
.p { width: 12px; height: 12px; }
.app { display: flex; flex-direction: column; width: 1280px; height: 681px; }
.title { height: 22px; display: flex; align-items: center; background: #fff; padding: 0 5px 0 2px; flex: none; letter-spacing: -.46px; }
.title span { margin-left: 4px; flex: 1; }
.winbtns { width: 110px; height: 14px; margin: 0 3px 4px 0; }
.menu { height: 18px; padding: 1px 0 0 9px; display: flex; align-items: center; gap: 12.6px; flex: none; border-bottom: 1px solid #ddd; }
.menu u { text-underline-offset: 1px; }

.bar { height: 29px; flex: none; display: flex; background: linear-gradient(#fafafa, #efefef); border-bottom: 1px solid #c3c3c3; padding-left: 3px; align-items: stretch; }
.grp { display: flex; align-items: center; flex: none; }
.g155 { width: 155px; } .g343 { width: 343px; } .g162 { width: 162px; } .g328 { width: 328px; }
.g307 { width: 307px; } .g239 { width: 239px; } .g38 { width: 38.5px; }
.handle { width: 5px; height: 16px; margin: 0 2px 0 1.5px; background: radial-gradient(circle, #bbb .7px, transparent 1px) 0 0 / 2.500px 2.700px; flex: none; }
.grp b { width: 23.4px; height: 23px; display: flex; align-items: center; justify-content: center; flex: none; }
.grp b.arr { width: 10.5px; }
.grp b.ml { margin-left: 1.5px; }
.grp b.ml1 { margin-left: .8px; }
.grp b.ml0 { margin-left: 0; }
.off { opacity: .32; filter: grayscale(.8); }
.grp b.press { background: #d8d8d8; border: 1px solid #a5a5a5; border-radius: 2px; height: 22px; width: 22.5px; }
.grp b.parr { width: 11.5px; }
.sep { width: 1px; height: 11px; background: #d0d0d0; margin: 0 3px; flex: none; }
.field { height: 19px; border: 1px solid #b0b0b0; border-radius: 2px; background: #fff; display: flex; align-items: center; padding-left: 5px; flex: none; }
.field span { flex: 1; }
.dis { background: #f3f3f3; color: #888; padding-right: 5px; }
.dis .t { opacity: .5; }
.w76 { width: 76px; padding-right: 0; } .w82 { width: 83px; }
.spin { align-self: stretch; width: 13px; border-left: 1px solid #c6c6c6; display: flex; flex-direction: column; align-items: center; justify-content: center; gap: 3px; }
.spin::before, .spin::after { content: ""; border: 3px solid transparent; border-top: 0; border-bottom: 4px solid #666; }
.spin::after { border-top: 4px solid #666; border-bottom: 0; }
.dis .spin { opacity: .6; }

.main { height: 557px; flex: none; display: flex; border-top: 1px solid #b5b5b5; }
.layers { width: 265px; display: flex; flex-direction: column; }
.phead { height: 18px; display: flex; align-items: center; padding: 0 1px 0 4px; gap: 1px; flex: none; }
.phead span { flex: 1; }
.ptools { height: 29px; display: flex; align-items: center; padding: 0 0 3px 3px; flex: none; }
.ptools b { width: 23.5px; display: flex; justify-content: center; }
.ptools b.arr { width: 10px; }
.ptools b.ml { margin-left: 1px; }
.ltree { flex: 1; background: #fff; border: 1px solid #bcbcbc; }
.lrow { height: 16.85px; display: flex; align-items: center; padding-left: 21.5px; font-weight: bold; font-size: 11px; letter-spacing: -.13px; background: linear-gradient(#eee, #eee) right 0 center / 3px 13px no-repeat; }
.cb { width: 13px; height: 13px; border: 1px solid #bbb; background: #fff; flex: none; }
.cb svg { width: 11px; height: 11px; }
.sw { width: 15px; height: 15px; border: 1px solid #555; margin: 0 6px 0 5.5px; flex: none; }
.none { border: 0; }
.purple { background: #9e60a4; } .gold { background: #e4b535; } .tan { background: #beb297; } .brown { background: #91522d; } .green { background: #85b66f; }
.pt { border: 0; background: radial-gradient(circle at 50% 50%, #222 1.3px, #bbb 2px, #aaa 3px, transparent 4px); }
.road { border-color: #bbb; border-width: 1px 0; height: 5px; }
.river { border: 0; height: 2px; background: #3f8fca; }
.sel { background-color: #0f7ad8; color: #fff; font-style: italic; text-decoration: underline; letter-spacing: .33px; }
.sel .cb { border-color: #7db6e8; }
.hid { color: #888; font-style: italic; letter-spacing: .17px; }
.last { padding-left: 8px; }
.tw { width: 13.5px; height: 7px; background: linear-gradient(#555, #555) 0 0 / 4px 7px no-repeat; clip-path: polygon(0 0, 4px 50%, 0 100%); }
.fbtn { margin-left: auto; width: 17px; height: 16px; background: #eee; display: flex; align-items: center; justify-content: center; }
.split { width: 7px; border-right: 1px solid #bcbcbc; }
.map { width: 728px; overflow: hidden; background: #fff; border-bottom: 1px solid #bcbcbc; }
.map > svg { margin-top: -1px; }
.split2 { width: 7px; border-left: 1px solid #bcbcbc; }
.map .green { fill: #85b66f; stroke: #3c4a36; }
.map .tan { fill: #beb297; stroke: #4a463c; }
.map .hole { fill: #fff; stroke: #4a463c; }
.map .gold { fill: #e4b535; stroke: #3c3520; }
.map .rv { fill: none; stroke: #1f78b4; stroke-width: 1.600; stroke-linejoin: round; }
.r1 { fill: none; stroke: #77736a; stroke-width: 3.800; }
.r2 { fill: none; stroke: #fff; stroke-width: 2.600; }
.city { fill: #f5e71c; stroke: #333; }
.lbl { font: 15px "Liberation Sans", sans-serif; letter-spacing: 0; fill: #111; stroke: #fff; stroke-width: 2.500; paint-order: stroke; }

.tool { width: 273px; display: flex; flex-direction: column; }
.tool .phead { padding-left: 3px; letter-spacing: -.3px; }
.tool .ptools .sep { height: 12px; margin: 0 3px; }
.search { height: 20px; flex: none; background: #fff; border: 1px solid #b0b0b0; border-radius: 2px; display: flex; align-items: center; padding: 0 6px; letter-spacing: -.2px; }
.search span { flex: 1; margin-left: 5px; }
.ttree { flex: 1; background: #fff; border: 1px solid #b8b8b8; border-top: 0; padding-top: 2px; }
.r { height: 16.8px; display: flex; align-items: center; }
.r .i { width: 15px; height: 15px; margin-right: 5px; }
.l0 { padding-left: 5px; } .l0 .t { margin-right: 9px; }
.l1 { padding-left: 40px; } .l2 { padding-left: 58px; }
.l1 .i { margin-right: 5.500px; } .l2 .i { margin-right: 6px; }
.sub { height: 14.3px; padding-left: 24px; } .sub .t { margin-right: 9px; }
.hov { background: #f0f0f0; }

.status { flex: 1; display: flex; align-items: center; padding: 2px 0 0 4px; }
.locate { width: 187px; color: #777; padding-left: 6px; gap: 5px; height: 20px; letter-spacing: -.26px; }
.s-coord { margin-left: 306px; width: 53px; letter-spacing: -.5px; }
.f-coord { width: 91px; letter-spacing: -.62px; }
.s-ext { width: 31px; padding-left: 4px; }
.s-scale { width: 26px; letter-spacing: -.65px; }
.f-scale { width: 77px; padding-left: 4px; }
.drop { width: 18px; align-self: stretch; border-left: 1px solid #bbb; display: flex; align-items: center; justify-content: center; }
.s-lock { width: 30px; padding-left: 9px; }
.s-mag { width: 45px; letter-spacing: -.65px; }
.f-mag { width: 82px; padding-left: 4px; }
.s-rot { margin-left: 8px; width: 47px; letter-spacing: -.75px; }
.f-rot { width: 79px; padding-left: 4px; }
.s-render { margin-left: 6px; width: 67px; display: flex; align-items: center; gap: 4px; letter-spacing: -.7px; }
.s-crs { width: 91px; display: flex; align-items: center; gap: 3px; letter-spacing: -.8px; }
.s-puz { margin-left: 12px; }
```
